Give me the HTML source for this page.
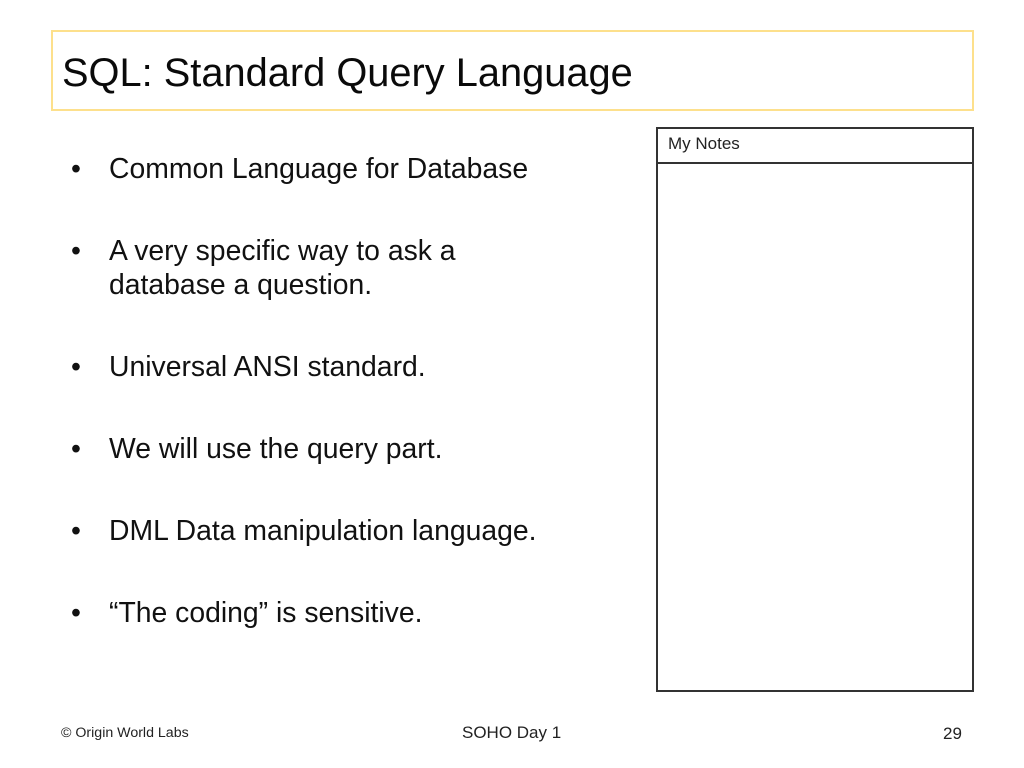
<!DOCTYPE html>
<html>
<head>
<meta charset="utf-8">
<style>
html,body{margin:0;padding:0;background:#fff;}
body{width:1024px;height:768px;position:relative;overflow:hidden;font-family:"Liberation Sans",sans-serif;color:#000;}
.t{position:absolute;white-space:nowrap;line-height:1;}
.b{position:absolute;font-size:28.35px;white-space:nowrap;line-height:34px;left:109px;color:#111;}
.d{position:absolute;font-size:28.35px;line-height:34px;left:71px;color:#111;}
.box{position:absolute;box-sizing:border-box;}
</style>
</head>
<body>
<div class="box" style="left:51px;top:30px;width:923px;height:81px;border:2px solid #fde08c;"></div>
<div class="t" style="left:62px;top:54px;font-size:39.8px;color:#0a0a0a;">SQL: Standard Query Language</div>

<div class="d" style="top:152px;">•</div><div class="b" style="top:152px;">Common Language for Database</div>
<div class="d" style="top:234px;">•</div><div class="b" style="top:234px;">A very specific way to ask a<br>database a question.</div>
<div class="d" style="top:350px;">•</div><div class="b" style="top:350px;">Universal ANSI standard.</div>
<div class="d" style="top:432px;">•</div><div class="b" style="top:432px;">We will use the query part.</div>
<div class="d" style="top:514px;">•</div><div class="b" style="top:514px;">DML Data manipulation language.</div>
<div class="d" style="top:596px;">•</div><div class="b" style="top:596px;">“The coding” is sensitive.</div>

<div class="box" style="left:656px;top:127px;width:318px;height:565px;border:2px solid #333;"></div>
<div class="box" style="left:657px;top:162px;width:316px;height:2px;background:#333;"></div>
<div class="t" style="left:668px;top:135px;font-size:17px;color:#222;">My Notes</div>

<div class="t" style="left:61px;top:726px;font-size:14.2px;color:#222;">© Origin World Labs</div>
<div class="t" style="left:462px;top:724px;font-size:17px;color:#222;">SOHO Day 1</div>
<div class="t" style="left:943px;top:725px;font-size:17px;color:#222;">29</div>
</body>
</html>
